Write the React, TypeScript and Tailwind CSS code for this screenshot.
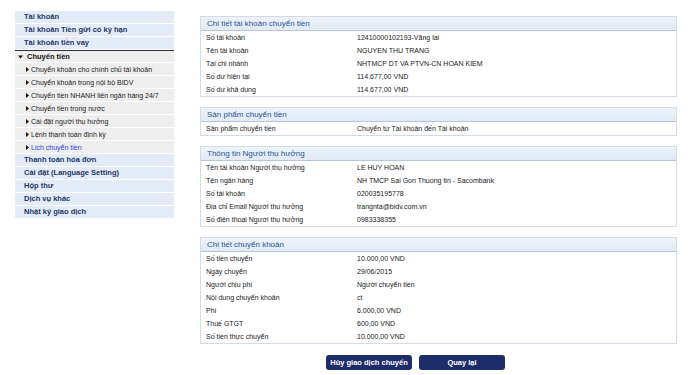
import React from "react";

const font = { fontFamily: '"Liberation Sans", Arial, sans-serif' };

function Tri({ down }: { down?: boolean }) {
  return down ? (
    <svg width="5" height="4" viewBox="0 0 5 4" className="shrink-0">
      <path d="M0 0.5 L5 0.5 L2.5 3.5 Z" fill="#111" />
    </svg>
  ) : (
    <svg width="3" height="5" viewBox="0 0 3 5" className="shrink-0">
      <path d="M0 0 L3 2.5 L0 5 Z" fill="#111" />
    </svg>
  );
}

function Top({ label }: { label: string }) {
  return (
    <div className="h-[13px] border-b border-white bg-[#e3ebf6] pl-[9px] flex items-center text-[7.5px] font-bold text-[#1d3768] leading-none">
      {label}
    </div>
  );
}

function Sub({ label, link }: { label: string; link?: boolean }) {
  return (
    <div className="h-[13px] border-b border-white bg-[#eeeeee] pl-[11px] flex items-center gap-[2px] text-[7px] leading-none">
      <Tri />
      <span className={link ? "text-[#2b3fd6]" : "text-[#222]"}>{label}</span>
    </div>
  );
}

function Panel({ title, rows }: { title: string; rows: [string, string][] }) {
  return (
    <div className="border border-[#d3dbe5] bg-white">
      <div className="h-[14px] bg-gradient-to-b from-[#eef3fa] to-[#e1eaf5] border-b border-[#b7c6d9] flex items-center pl-[6px] text-[8px] text-[#2a5595] leading-none">
        {title}
      </div>
      {rows.map(([l, v], i) => (
        <div key={i} className="h-[13px] flex items-center text-[7px] text-[#222] leading-none pl-[5px]">
          <div className="w-[151px] shrink-0">{l}</div>
          <div>{v}</div>
        </div>
      ))}
    </div>
  );
}

export default function App() {
  return (
    <div className="w-[700px] h-[375px] bg-white flex items-start pl-[15px] pt-[11px]" style={font}>
      <div className="w-[159px] shrink-0">
        <Top label="Tài khoản" />
        <Top label="Tài khoản Tiền gửi có kỳ hạn" />
        <Top label="Tài khoản tiền vay" />
        <div className="h-[13px] border-t border-[#333] border-b border-b-white bg-[#eeeeee] pl-[3px] flex items-center gap-[4px] text-[7.5px] font-bold text-[#111] leading-none">
          <Tri down />
          <span>Chuyển tiền</span>
        </div>
        <Sub label="Chuyển khoản cho chính chủ tài khoản" />
        <Sub label="Chuyển khoản trong nội bộ BIDV" />
        <Sub label="Chuyển tiền NHANH liên ngân hàng 24/7" />
        <Sub label="Chuyển tiền trong nước" />
        <Sub label="Cài đặt người thụ hưởng" />
        <Sub label="Lệnh thanh toán định kỳ" />
        <Sub label="Lịch chuyển tiền" link />
        <Top label="Thanh toán hóa đơn" />
        <Top label="Cài đặt (Language Setting)" />
        <Top label="Hộp thư" />
        <Top label="Dịch vụ khác" />
        <Top label="Nhật ký giao dịch" />
      </div>
      <div className="ml-[26px] mt-[5px] w-[477px] flex flex-col gap-[10px]">
        <Panel
          title="Chi tiết tài khoản chuyển tiền"
          rows={[
            ["Số tài khoản", "12410000102193-Vãng lai"],
            ["Tên tài khoản", "NGUYEN THU TRANG"],
            ["Tại chi nhánh", "NHTMCP DT VA PTVN-CN HOAN KIEM"],
            ["Số dư hiện tại", "114.677,00 VND"],
            ["Số dư khả dụng", "114.677,00 VND"],
          ]}
        />
        <Panel
          title="Sản phẩm chuyển tiền"
          rows={[["Sản phẩm chuyển tiền", "Chuyển từ Tài khoản đến Tài khoản"]]}
        />
        <Panel
          title="Thông tin Người thụ hưởng"
          rows={[
            ["Tên tài khoản Người thụ hưởng", "LE HUY HOAN"],
            ["Tên ngân hàng", "NH TMCP Sai Gon Thuong tin - Sacombank"],
            ["Số tài khoản", "020035195778"],
            ["Địa chỉ Email Người thụ hưởng", "trangnta@bidv.com.vn"],
            ["Số điện thoại Người thụ hưởng", "0983338355"],
          ]}
        />
        <Panel
          title="Chi tiết chuyển khoản"
          rows={[
            ["Số tiền chuyển", "10.000,00 VND"],
            ["Ngày chuyển", "29/06/2015"],
            ["Người chịu phí", "Người chuyển tiền"],
            ["Nội dung chuyển khoản", "ct"],
            ["Phí", "6.000,00 VND"],
            ["Thuế GTGT", "600,00 VND"],
            ["Số tiền thực chuyển", "10.000,00  VND"],
          ]}
        />
        <div className="flex gap-[7px] pl-[126px] mt-[1px]">
          <button className="w-[86px] h-[15px] rounded-[3px] bg-[#1f2c6a] text-white text-[7.5px] font-bold leading-none flex items-center justify-center">
            Hủy giao dịch chuyển
          </button>
          <button className="w-[86px] h-[15px] rounded-[3px] bg-[#1f2c6a] text-white text-[7.5px] font-bold leading-none flex items-center justify-center">
            Quay lại
          </button>
        </div>
      </div>
    </div>
  );
}
